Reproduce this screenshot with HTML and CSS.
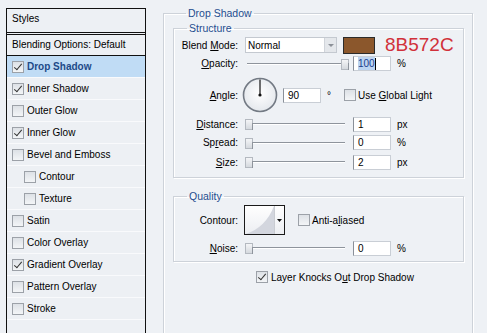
FILE: index.html
```html
<!DOCTYPE html>
<html lang="en">
<head>
  <meta charset="UTF-8" />
  <title>Layer Style - Drop Shadow</title>
  <link rel="stylesheet" href="styles.css">
</head>
<body>
  <div class="dialog">

    <!-- STYLES LIST -->
    <div class="styles-panel">
      <div class="panel-head">Styles</div>
      <div class="panel-blend">Blending Options: Default</div>
      <ul class="fx-list">
        <li class="fx active"><span class="cb checked"></span>Drop Shadow</li>
        <li class="fx"><span class="cb checked"></span>Inner Shadow</li>
        <li class="fx"><span class="cb"></span>Outer Glow</li>
        <li class="fx"><span class="cb checked"></span>Inner Glow</li>
        <li class="fx"><span class="cb"></span>Bevel and Emboss</li>
        <li class="fx sub"><span class="cb"></span>Contour</li>
        <li class="fx sub"><span class="cb"></span>Texture</li>
        <li class="fx"><span class="cb"></span>Satin</li>
        <li class="fx"><span class="cb"></span>Color Overlay</li>
        <li class="fx"><span class="cb checked"></span>Gradient Overlay</li>
        <li class="fx"><span class="cb"></span>Pattern Overlay</li>
        <li class="fx"><span class="cb"></span>Stroke</li>
      </ul>
    </div>

    <!-- DROP SHADOW SETTINGS -->
    <fieldset class="group outer">
      <legend>Drop Shadow</legend>

      <fieldset class="group structure">
        <legend>Structure</legend>

        <div class="row r-blend">
          <span class="lbl">Blend <u>M</u>ode:</span>
          <div class="select"><span>Normal</span><span class="sel-btn"></span></div>
          <div class="swatch"></div>
          <span class="hex">8B572C</span>
        </div>

        <div class="row r-opacity">
          <span class="lbl"><u>O</u>pacity:</span>
          <div class="slider"><span class="thumb thumb-end"></span></div>
          <div class="field"><span class="selected">100</span><span class="caret"></span></div>
          <span class="unit">%</span>
        </div>

        <div class="row r-angle">
          <span class="lbl"><u>A</u>ngle:</span>
          <svg class="dial" width="36" height="36" viewBox="0 0 36 36">
            <defs>
              <radialGradient id="dialFill" cx="0.5" cy="0.45" r="0.6">
                <stop offset="0" stop-color="#ffffff" />
                <stop offset="1" stop-color="#e2e6eb" />
              </radialGradient>
            </defs>
            <circle cx="18" cy="18" r="16.5" fill="url(#dialFill)" stroke="#737a84" stroke-width="1.6" />
            <line x1="18" y1="18" x2="18" y2="2.5" stroke="#111" stroke-width="1.2" />
            <circle cx="18" cy="18" r="1.6" fill="#111" />
          </svg>
          <div class="field field-angle">90</div>
          <span class="deg">°</span>
          <span class="cb"></span>
          <span class="check-lbl">Use <u>G</u>lobal Light</span>
        </div>

        <div class="row r-dist">
          <span class="lbl"><u>D</u>istance:</span>
          <div class="slider"><span class="thumb"></span></div>
          <div class="field">1</div>
          <span class="unit">px</span>
        </div>

        <div class="row r-spread">
          <span class="lbl">Sp<u>r</u>ead:</span>
          <div class="slider"><span class="thumb"></span></div>
          <div class="field">0</div>
          <span class="unit">%</span>
        </div>

        <div class="row r-size">
          <span class="lbl"><u>S</u>ize:</span>
          <div class="slider"><span class="thumb"></span></div>
          <div class="field">2</div>
          <span class="unit">px</span>
        </div>
      </fieldset>

      <fieldset class="group quality">
        <legend>Quality</legend>

        <div class="row r-contour">
          <span class="lbl">Contour:</span>
          <svg class="contour" width="41" height="30" viewBox="0 0 41 30">
            <defs>
              <linearGradient id="contBg" x1="0" y1="0" x2="0" y2="1">
                <stop offset="0" stop-color="#ffffff" />
                <stop offset="1" stop-color="#eceef2" />
              </linearGradient>
            </defs>
            <rect x="0.5" y="0.5" width="40" height="29" fill="url(#contBg)" stroke="#1a1a1a" />
            <path d="M2 29 Q 22 22 30 1 L30 29 Z" fill="#d3d6de" />
            <line x1="30.5" y1="1" x2="30.5" y2="29" stroke="#c9ccd2" />
            <path d="M33 14 L38 14 L35.5 17 Z" fill="#111" />
          </svg>
          <span class="cb cb-anti"></span>
          <span class="check-lbl">Anti-a<u>l</u>iased</span>
        </div>

        <div class="row r-noise">
          <span class="lbl"><u>N</u>oise:</span>
          <div class="slider"><span class="thumb"></span></div>
          <div class="field">0</div>
          <span class="unit">%</span>
        </div>
      </fieldset>

      <div class="knock"><span class="cb checked"></span>Layer Knocks O<u>u</u>t Drop Shadow</div>
    </fieldset>

  </div>
</body>
</html>
```

FILE: styles.css
```css
body {
  margin: 0;
  width: 487px;
  height: 333px;
  overflow: hidden;
  background-color: #eef1f5;
  font-family: "Liberation Sans", Arial, sans-serif;
  font-size: 10px;
  color: #000;
}

u {
  text-decoration: underline;
  text-underline-offset: 1px;
}

.dialog {
  display: flex;
  align-items: flex-start;
}

/* ---------- left list ---------- */

.styles-panel {
  margin: 8px 0 0 6px;
  width: 140px;
  height: 325px;
  box-sizing: border-box;
  border: 1px solid #111;
  border-bottom: none;
  background-color: #edf0f4;
}

.panel-head {
  height: 20px;
  line-height: 20px;
  padding: 0 0 3px 5px;
  border-bottom: 3px double #111;
}

.panel-blend {
  height: 20px;
  line-height: 20px;
  padding-left: 5px;
  border-bottom: 1px solid #111;
}

.fx-list {
  list-style: none;
  margin: 0;
  padding: 0;
}

.fx {
  display: flex;
  align-items: center;
  height: 21px;
  padding-left: 5px;
  border-bottom: 1px solid #f9fafc;
}

.fx.sub {
  padding-left: 17px;
}

.fx.active {
  background-color: #c0dcf5;
  color: #1d4a88;
  font-weight: bold;
}

/* ---------- checkbox ---------- */

.cb {
  position: relative;
  display: inline-block;
  flex: none;
  width: 12px;
  height: 12px;
  box-sizing: border-box;
  margin-right: 3px;
  border: 1px solid #9ca1a8;
  background: linear-gradient(#dde1e6, #f3f5f7);
}

.cb.checked::after {
  content: "";
  position: absolute;
  left: 3px;
  top: 0;
  width: 3px;
  height: 7px;
  border-right: 1.5px solid #333;
  border-bottom: 1.5px solid #333;
  transform: rotate(40deg);
}

/* ---------- group boxes ---------- */

.group {
  margin: 0;
  border: 1px solid #cdd2d9;
  box-shadow: inset 1px 1px 0 #fff, 1px 1px 0 #fff;
  min-width: 0;
}

.group > legend {
  margin-left: 13px;
  padding: 0 2px;
  line-height: 12px;
  font-size: 10.5px;
  color: #1f4e8f;
}

.outer {
  margin: 7px 0 0 17px;
  width: 310px;
  height: 326px;
  box-sizing: border-box;
  padding: 3px 8px 0 9px;
  border-bottom: none;
}

.structure {
  padding: 2px 0 5px 0;
}

.quality {
  margin-top: 12px;
  padding: 2px 0 4px 0;
}

/* ---------- rows ---------- */

.row {
  display: flex;
  align-items: center;
}

.lbl {
  width: 64px;
  flex: none;
  text-align: right;
  margin-right: 7px;
  white-space: nowrap;
}

.r-blend { height: 18px; }
.r-opacity { height: 19px; }
.r-angle { height: 36px; margin-top: 4px; }
.r-dist { height: 18px; margin-top: 2px; }
.r-spread { height: 19px; }
.r-size { height: 20px; }
.r-contour { height: 32px; }
.r-noise { height: 18px; margin-top: 3px; }

.select {
  display: flex;
  align-items: center;
  justify-content: space-between;
  width: 92px;
  height: 16px;
  box-sizing: border-box;
  padding-left: 2px;
  border: 1px solid #c4c9d0;
  background-color: #fff;
}

.sel-btn {
  position: relative;
  width: 11px;
  height: 14px;
  background-color: #e4e7eb;
  border-left: 1px solid #d0d4da;
}

.sel-btn::after {
  content: "";
  position: absolute;
  left: 3px;
  top: 6px;
  border-left: 3px solid transparent;
  border-right: 3px solid transparent;
  border-top: 3px solid #8b9098;
}

.swatch {
  width: 32px;
  height: 17px;
  box-sizing: border-box;
  margin-left: 6px;
  border: 1px solid #2b2b2b;
  background-color: #8b572c;
}

.hex {
  margin-left: 10px;
  font-size: 19px;
  color: #d1303a;
  line-height: 18px;
}

.slider {
  position: relative;
  width: 100px;
  height: 14px;
  flex: none;
}

.slider::before {
  content: "";
  position: absolute;
  left: 2px;
  right: 0;
  top: 6px;
  border-top: 1px solid #8e949c;
  border-bottom: 1px solid #fff;
}

.thumb {
  position: absolute;
  left: 0;
  top: 2px;
  width: 6px;
  height: 9px;
  border: 1px solid #b4b9c0;
  background: linear-gradient(#f4f5f7, #d5d9de);
}

.thumb::after {
  content: "";
  position: absolute;
  left: 6px;
  top: 3px;
  height: 7px;
  border-left: 1px solid #8e949c;
}

.thumb-end {
  left: 96px;
}

.field {
  display: flex;
  align-items: center;
  width: 38px;
  height: 15px;
  box-sizing: border-box;
  margin-left: 8px;
  padding-left: 4px;
  border: 1px solid #c9ced5;
  border-left-color: #8a9099;
  background-color: #fff;
  line-height: 13px;
}

.selected {
  background-color: #bcd4f1;
  color: #1a3d8c;
}

.caret {
  width: 1px;
  height: 12px;
  background-color: #000;
}

.unit {
  margin-left: 6px;
}

.dial {
  margin-left: -3px;
  flex: none;
}

.field-angle {
  margin-left: 5px;
}

.deg {
  margin-left: 6px;
  margin-right: 13px;
}

.check-lbl {
  white-space: nowrap;
}

.cb + .check-lbl {
  margin-left: -1px;
}

.cb-anti {
  margin-left: 13px;
}

.contour {
  margin-left: -1px;
  flex: none;
}

.knock {
  display: flex;
  align-items: center;
  height: 18px;
  margin: 6px 0 0 83px;
}
```
